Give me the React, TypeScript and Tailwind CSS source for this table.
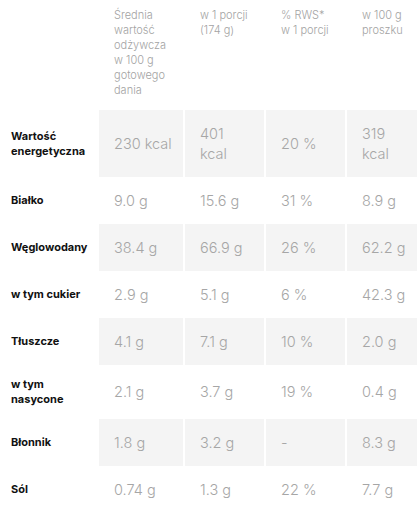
import React from "react";

const rows = [
  { label: "Wartość energetyczna", values: ["230 kcal", "401|kcal", "20 %", "319|kcal"] },
  { label: "Białko", values: ["9.0 g", "15.6 g", "31 %", "8.9 g"] },
  { label: "Węglowodany", values: ["38.4 g", "66.9 g", "26 %", "62.2 g"] },
  { label: "w tym cukier", values: ["2.9 g", "5.1 g", "6 %", "42.3 g"] },
  { label: "Tłuszcze", values: ["4.1 g", "7.1 g", "10 %", "2.0 g"] },
  { label: "w tym nasycone", values: ["2.1 g", "3.7 g", "19 %", "0.4 g"] },
  { label: "Błonnik", values: ["1.8 g", "3.2 g", "-", "8.3 g"] },
  { label: "Sól", values: ["0.74 g", "1.3 g", "22 %", "7.7 g"] },
];

const headers = [
  "Średnia wartość odżywcza w 100 g gotowego dania",
  "w 1 porcji (174 g)",
  "% RWS* w 1 porcji",
  "w 100 g proszku",
];

export default function App() {
  return (
    <div className="w-[417px] h-[512px] overflow-hidden bg-white" style={{ fontFamily: "Inter, 'Noto Sans', sans-serif" }}>
      <div className="grid grid-cols-[97px_84px_79px_79px_1fr] gap-x-[2px]">
        {/* header */}
        <div />
        {headers.map((h) => (
          <div key={h} className="pl-[15px] pr-[14px] pt-[8px] pb-[12px] text-[11px] leading-[15px] text-[#a3a3a3] font-light">
            {h}
          </div>
        ))}

        {rows.map((row, i) => {
          const shaded = i % 2 === 0;
          return (
            <React.Fragment key={row.label}>
              <div className="pl-[11px] pr-1 py-[12px] flex items-center text-[11px] leading-[15px] font-bold text-[#111]">
                {row.label}
              </div>
              {row.values.map((v, j) => (
                <div
                  key={j}
                  className={`pl-[15px] pr-1 py-[13.5px] flex flex-col justify-center whitespace-nowrap text-[14.5px] leading-[20px] text-[#a6a6a6] font-light ${
                    shaded ? "bg-[#f4f4f4]" : ""
                  }`}
                >
                  {v.split("|").map((part) => (
                    <span key={part}>{part}</span>
                  ))}
                </div>
              ))}
            </React.Fragment>
          );
        })}
      </div>
    </div>
  );
}
